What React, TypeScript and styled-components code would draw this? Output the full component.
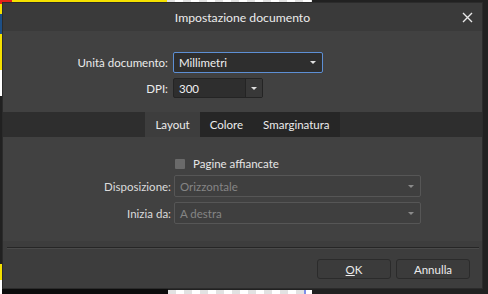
import styled, { createGlobalStyle } from "styled-components";

const GlobalStyle = createGlobalStyle`
  html, body {
    margin: 0;
    padding: 0;
    background: #202020;
    overflow: hidden;
  }
  * { box-sizing: border-box; }
`;

const Desktop = styled.div`
  position: relative;
  width: 488px;
  height: 294px;
  background: #212121;
  font-family: Lato, "Open Sans", sans-serif;
  font-size: 11.5px;
  color: #e6e6e6;
  overflow: hidden;
`;

// bits of the canvas peeking out behind the dialog
const Scrap = styled.div<{ $bg: string }>`
  position: absolute;
  background: ${p => p.$bg};
`;

const Checker = styled.div`
  position: absolute;
  background-color: #ffffff;
  background-image: linear-gradient(90deg, #e2e2e2 50%, transparent 50%);
  background-size: 16px 16px;
`;

const Window = styled.div`
  position: absolute;
  left: 2px;
  top: 2px;
  width: 481px;
  height: 287px;
  border: 1px solid #2b2b2b;
  background: #414141;
  display: flex;
  flex-direction: column;
`;

const TitleBar = styled.div`
  position: relative;
  height: 28px;
  flex: none;
  background: #3a3a3a;
  display: flex;
  align-items: center;
  justify-content: center;
  font-size: 12.2px;
  color: #ececec;
`;

const CloseButton = styled.div`
  position: absolute;
  right: 8px;
  top: 7px;
  width: 14px;
  height: 14px;
  display: flex;
  align-items: center;
  justify-content: center;
`;

const FormGrid = styled.div<{ $label: number; $top: number; $bottom: number }>`
  display: grid;
  grid-template-columns: ${p => p.$label}px auto;
  column-gap: 5px;
  row-gap: 5px;
  align-items: center;
  justify-items: start;
  padding: ${p => p.$top}px 0 ${p => p.$bottom}px;
`;

const Label = styled.div<{ $dim?: boolean }>`
  justify-self: end;
  color: ${p => (p.$dim ? "#dcdcdc" : "#ececec")};
  white-space: nowrap;
`;

const Select = styled.div<{ $w: number; $h: number; $focus?: boolean; $disabled?: boolean }>`
  width: ${p => p.$w}px;
  height: ${p => p.$h}px;
  display: flex;
  align-items: center;
  padding-left: 5px;
  border: 1px solid ${p => (p.$focus ? "#5d8fd4" : p.$disabled ? "#565656" : "#242424")};
  border-radius: 2px;
  background: ${p => (p.$disabled ? "#3f3f3f" : "#2e2e2e")};
  color: ${p => (p.$disabled ? "#858585" : "#f0f0f0")};
`;

const Value = styled.span`
  flex: 1;
  white-space: nowrap;
`;

const Arrow = styled.span<{ $dim?: boolean }>`
  width: 0;
  height: 0;
  margin-right: 6px;
  border-left: 3px solid transparent;
  border-right: 3px solid transparent;
  border-top: 3px solid ${p => (p.$dim ? "#8a8a8a" : "#e0e0e0")};
`;

const SpinPart = styled.div`
  width: 17px;
  height: 100%;
  display: flex;
  align-items: center;
  justify-content: center;
  border-left: 1px solid #242424;
  background: #383838;

  & > span { margin-right: 0; }
`;

const TabStrip = styled.div`
  height: 25px;
  flex: none;
  background: #2e2e2e;
  display: flex;
  justify-content: center;
`;

const TabGroup = styled.div`
  display: flex;
  background: #262626;
`;

const Tab = styled.div<{ $active?: boolean }>`
  display: flex;
  align-items: center;
  padding: 0 10px;
  background: ${p => (p.$active ? "#3d3d3d" : "transparent")};
  color: #ececec;
`;

const Content = styled.div`
  flex: 1;
  display: flex;
  flex-direction: column;
`;

const CheckRow = styled.div`
  display: flex;
  align-items: center;
  gap: 8px;
  padding-left: 1px;
`;

const CheckBox = styled.span`
  width: 10px;
  height: 10px;
  border-radius: 1px;
  background: #6a6a6a;
`;

const Footer = styled.div`
  flex: none;
  height: 47px;
  background: #3d3d3d;
  padding: 6px 3px 0 4px;
  display: flex;
  flex-direction: column;
`;

const Rule = styled.div`
  height: 2px;
  border-top: 1px solid #262626;
  border-bottom: 1px solid #4a4a4a;
`;

const Buttons = styled.div`
  display: flex;
  justify-content: flex-end;
  gap: 5px;
  padding: 10px 9px 0 0;
`;

const Button = styled.div`
  width: 74px;
  height: 20px;
  display: flex;
  align-items: center;
  justify-content: center;
  border: 1px solid #2b2b2b;
  border-radius: 3px;
  background: #3b3b3b;
  color: #ececec;
`;

export default function App() {
  return (
    <>
      <GlobalStyle />
      <Desktop>
        <Scrap $bg="#f5e100" style={{ left: 0, top: 0, width: 167, height: 2 }} />
        <Scrap $bg="#e3211b" style={{ left: 0, top: 0, width: 12, height: 2 }} />
        <Checker style={{ left: 167, top: 0, width: 145, height: 2 }} />
        <Scrap $bg="#f5e100" style={{ left: 0, top: 0, width: 2, height: 96 }} />
        <Scrap $bg="#e3211b" style={{ left: 0, top: 0, width: 2, height: 4 }} />
        <Scrap $bg="#1d4f86" style={{ left: 0, top: 14, width: 2, height: 20 }} />
        <Scrap $bg="#ffffff" style={{ left: 0, top: 70, width: 2, height: 26 }} />
        <Scrap $bg="#f5e100" style={{ left: 0, top: 264, width: 2, height: 16 }} />
        <Scrap $bg="#ffffff" style={{ left: 0, top: 280, width: 2, height: 14 }} />
        <Scrap $bg="#0c0c0c" style={{ left: 2, top: 289, width: 166, height: 5 }} />
        <Checker style={{ left: 168, top: 290, width: 144, height: 4 }} />
        <Scrap $bg="#7e8fe8" style={{ left: 304, top: 290, width: 2, height: 4 }} />

        <Window>
          <TitleBar>
            Impostazione documento
            <CloseButton>
              <svg width="11" height="11" viewBox="0 0 11 11">
                <path d="M1 1L10 10M10 1L1 10" stroke="#e8e8e8" strokeWidth="1.4" />
              </svg>
            </CloseButton>
          </TitleBar>

          <FormGrid $label={165} $top={21} $bottom={14}>
            <Label>Unità documento:</Label>
            <Select $w={150} $h={21} $focus>
              <Value>Millimetri</Value>
              <Arrow />
            </Select>
            <Label>DPI:</Label>
            <Select $w={90} $h={20} style={{ paddingRight: 0 }}>
              <Value>300</Value>
              <SpinPart>
                <Arrow />
              </SpinPart>
            </Select>
          </FormGrid>

          <TabStrip>
            <TabGroup>
              <Tab $active>Layout</Tab>
              <Tab>Colore</Tab>
              <Tab>Smarginatura</Tab>
            </TabGroup>
          </TabStrip>

          <Content>
            <FormGrid $label={168} $top={20} $bottom={0} style={{ columnGap: 3, rowGap: 5 }}>
              <span />
              <CheckRow>
                <CheckBox />
                <span>Pagine affiancate</span>
              </CheckRow>
              <Label $dim>Disposizione:</Label>
              <Select $w={247} $h={22} $disabled>
                <Value>Orizzontale</Value>
                <Arrow $dim />
              </Select>
              <Label $dim>Inizia da:</Label>
              <Select $w={247} $h={22} $disabled>
                <Value>A destra</Value>
                <Arrow $dim />
              </Select>
            </FormGrid>
          </Content>

          <Footer>
            <Rule />
            <Buttons>
              <Button>
                <u>O</u>K
              </Button>
              <Button>Annulla</Button>
            </Buttons>
          </Footer>
        </Window>
      </Desktop>
    </>
  );
}
